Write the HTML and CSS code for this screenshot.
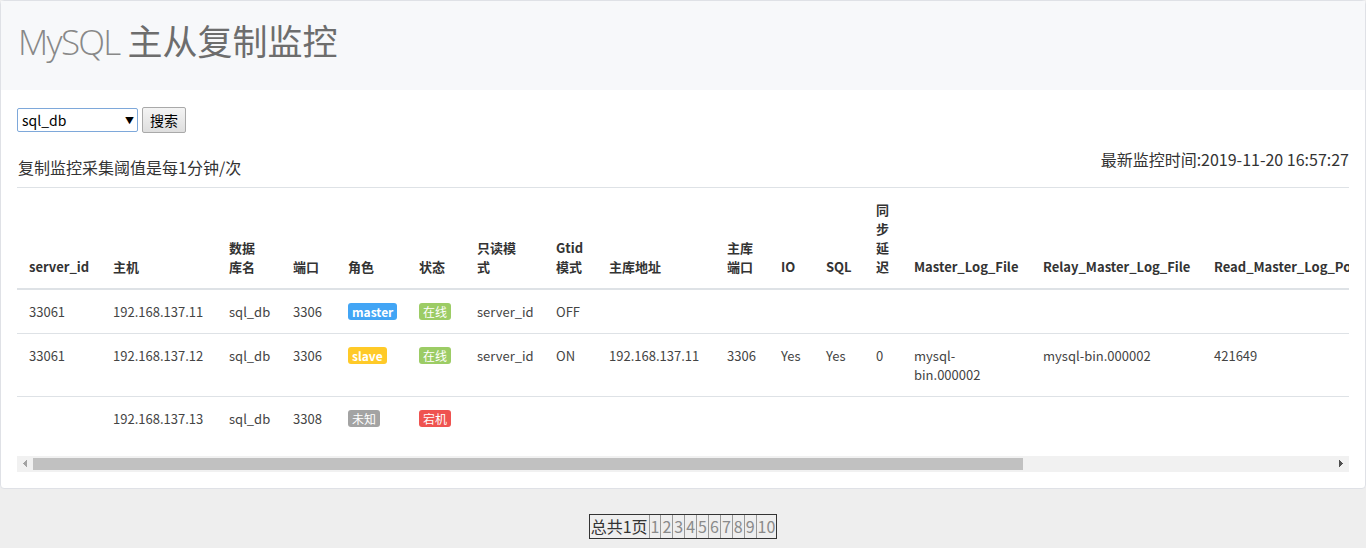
FILE: index.html
```html
<!DOCTYPE html>
<html lang="zh-CN">
<head>
    <meta charset="UTF-8">
    <meta name="viewport" content="width=device-width, initial-scale=1.0">
    <title>MySQL 主从复制监控</title>
    <link rel="stylesheet" href="styles.css">
</head>
<body>

    <!-- Monitor Card -->
    <div class="card">
        <div class="card-header">
            <h1 class="title"><span class="title-en">MySQL</span> 主从复制监控</h1>
        </div>

        <div class="card-body">
            <form class="search-form">
                <div class="select-wrap">
                    <select name="db" class="db-select">
                        <option>sql_db</option>
                    </select>
                </div>
                <button type="submit" class="btn-search">搜索</button>
            </form>

            <div class="info-row">
                <p class="info-left">复制监控采集阈值是每1分钟/次</p>
                <p class="info-right">最新监控时间:2019-11-20 16:57:27</p>
            </div>

            <div class="table-responsive">
                <table class="table">
                    <colgroup>
                        <col style="width:84px">
                        <col style="width:116px">
                        <col style="width:64px">
                        <col style="width:55px">
                        <col style="width:71px">
                        <col style="width:58px">
                        <col style="width:79px">
                        <col style="width:53px">
                        <col style="width:118px">
                        <col style="width:54px">
                        <col style="width:45px">
                        <col style="width:50px">
                        <col style="width:38px">
                        <col style="width:129px">
                        <col style="width:171px">
                        <col style="width:180px">
                        <col style="width:180px">
                        <col style="width:205px">
                    </colgroup>
                    <thead>
                        <tr>
                            <th>server_id</th>
                            <th>主机</th>
                            <th>数据<br>库名</th>
                            <th>端口</th>
                            <th>角色</th>
                            <th>状态</th>
                            <th>只读模<br>式</th>
                            <th>Gtid<br>模式</th>
                            <th>主库地址</th>
                            <th>主库<br>端口</th>
                            <th>IO</th>
                            <th>SQL</th>
                            <th>同步延迟</th>
                            <th>Master_Log_File</th>
                            <th>Relay_Master_Log_File</th>
                            <th>Read_Master_Log_Pos</th>
                            <th>Exec_Master_Log_Pos</th>
                            <th>Last_Error</th>
                        </tr>
                    </thead>
                    <tbody>
                        <tr>
                            <td>33061</td>
                            <td>192.168.137.11</td>
                            <td>sql_db</td>
                            <td>3306</td>
                            <td><span class="badge badge-master">master</span></td>
                            <td><span class="badge badge-online">在线</span></td>
                            <td>server_id</td>
                            <td>OFF</td>
                            <td></td><td></td><td></td><td></td><td></td>
                            <td class="log-file"></td><td></td><td></td><td></td><td></td>
                        </tr>
                        <tr>
                            <td>33061</td>
                            <td>192.168.137.12</td>
                            <td>sql_db</td>
                            <td>3306</td>
                            <td><span class="badge badge-slave">slave</span></td>
                            <td><span class="badge badge-online">在线</span></td>
                            <td>server_id</td>
                            <td>ON</td>
                            <td>192.168.137.11</td>
                            <td>3306</td>
                            <td>Yes</td>
                            <td>Yes</td>
                            <td>0</td>
                            <td class="log-file">mysql-bin.000002</td>
                            <td>mysql-bin.000002</td>
                            <td>421649</td>
                            <td>421649</td>
                            <td></td>
                        </tr>
                        <tr>
                            <td></td>
                            <td>192.168.137.13</td>
                            <td>sql_db</td>
                            <td>3308</td>
                            <td><span class="badge badge-unknown">未知</span></td>
                            <td><span class="badge badge-down">宕机</span></td>
                            <td></td><td></td><td></td><td></td><td></td>
                            <td></td><td></td><td class="log-file"></td><td></td><td></td>
                            <td></td><td></td>
                        </tr>
                    </tbody>
                </table>
            </div>

            <!-- horizontal scrollbar of the table -->
            <div class="scrollbar">
                <span class="scroll-btn scroll-left"></span>
                <div class="scroll-track">
                    <div class="scroll-thumb"></div>
                </div>
                <span class="scroll-btn scroll-right"></span>
            </div>
        </div>
    </div>

    <!-- Pagination -->
    <div class="pager-wrap">
        <div class="pager">
            <span class="pager-total">总共1页</span><a href="#">1</a><a href="#">2</a><a href="#">3</a><a href="#">4</a><a href="#">5</a><a href="#">6</a><a href="#">7</a><a href="#">8</a><a href="#">9</a><a href="#">10</a>
        </div>
    </div>

</body>
</html>
```

FILE: styles.css
```css
/* Global Styles */
body {
    font-family: "Noto Sans CJK SC", sans-serif;
    background-color: #eeeeee;
    color: #333;
    margin: 0;
    padding: 0;
}

/* Card */
.card {
    background-color: #fff;
    border: 1px solid #dfe1e6;
    border-radius: 4px;
}

.card-header {
    background-color: #f7f8fa;
    height: 89px;
    padding: 0 17px;
    box-sizing: border-box;
}

.title {
    margin: 0;
    padding-top: 18px;
    font-size: 35px;
    font-weight: 400;
    line-height: 1.2;
    color: #6d6d6d;
}

.title-en {
    font-family: "Open Sans", sans-serif;
    font-weight: 300;
    letter-spacing: -1.7px;
    color: #888;
}

.card-body {
    padding: 17px 16px 16px 16px;
}

/* Search Form */
.search-form {
    display: flex;
    align-items: center;
    gap: 4px;
}

.select-wrap {
    position: relative;
}

.select-wrap::after {
    content: "▼";
    position: absolute;
    right: 4px;
    top: 6px;
    font-size: 9px;
    color: #000;
    pointer-events: none;
}

.db-select {
    appearance: none;
    display: block;
    width: 121px;
    height: 24px;
    padding: 0 4px;
    font-family: "Noto Sans CJK SC", sans-serif;
    font-size: 14px;
    color: #000;
    background: #fff;
    border: 1px solid #7ea8da;
    border-radius: 2px;
    outline: none;
}

.btn-search {
    height: 26px;
    width: 44px;
    padding: 0;
    font-family: "Noto Sans CJK SC", sans-serif;
    font-size: 14px;
    color: #000;
    background: linear-gradient(#f4f4f4, #dedede);
    border: 1px solid #a9a9a9;
    border-radius: 2px;
}

/* Info Row */
.info-row {
    display: flex;
    justify-content: space-between;
    align-items: flex-start;
    margin-top: 14px;
    margin-bottom: 8px;
}

.info-row p {
    margin: 0;
    font-size: 16px;
    line-height: 24px;
}

.info-left {
    padding-top: 8px;
    padding-left: 1px;
}

/* Table */
.table-responsive {
    overflow: hidden;
}

.table {
    width: 1750px;
    table-layout: fixed;
    border-collapse: collapse;
    margin-bottom: 16px;
    font-size: 13px;
}

.table th {
    padding: 12px;
    text-align: left;
    vertical-align: bottom;
    font-size: 13px;
    font-weight: 700;
    line-height: 19px;
    color: #333;
    border-top: 1px solid #dee2e6;
    border-bottom: 2px solid #dee2e6;
}

.table td {
    padding: 12px;
    vertical-align: top;
    line-height: 19px;
    color: #444;
    border-top: 1px solid #dee2e6;
}

.table td.log-file {
    padding-right: 22px;
}

/* Scrollbar */
.scrollbar {
    display: flex;
    height: 16px;
    background-color: #f1f1f1;
}

.scroll-btn {
    width: 16px;
    flex: none;
    background-repeat: no-repeat;
    background-size: 4px 4px;
    background-position: 6px 4px, 6px 8px;
}

.scroll-left {
    background-image:
        linear-gradient(to bottom right, transparent 50%, #a3a3a3 50%),
        linear-gradient(to top right, transparent 50%, #a3a3a3 50%);
}

.scroll-right {
    background-image:
        linear-gradient(to bottom left, transparent 50%, #505050 50%),
        linear-gradient(to top left, transparent 50%, #505050 50%);
}

.scroll-track {
    flex: 1;
    padding: 2px 0;
}

.scroll-thumb {
    width: 990px;
    height: 12px;
    background-color: #c1c1c1;
}

/* Badges */
.badge {
    display: inline-block;
    padding: 1px 4px;
    font-size: 12px;
    font-weight: 700;
    line-height: 15px;
    color: #fff;
    border-radius: 3px;
}

.badge-master {
    background-color: #42a5f5;
}

.badge-slave {
    background-color: #ffca28;
}

.badge-online {
    background-color: #9ccc65;
    font-weight: 400;
}

.badge-unknown {
    background-color: #a3a3a3;
    font-weight: 400;
}

.badge-down {
    background-color: #ef5350;
    font-weight: 400;
}

/* Pagination */
.pager-wrap {
    display: flex;
    justify-content: center;
    padding-top: 25px;
}

.pager {
    display: flex;
    border: 1px solid #333;
    font-size: 16px;
    line-height: 23px;
}

.pager-total {
    padding: 0 1px;
    color: #333;
}

.pager a {
    padding: 0 1px;
    color: #8a8a8a;
    text-decoration: none;
    border-left: 1px solid #999;
}
```
